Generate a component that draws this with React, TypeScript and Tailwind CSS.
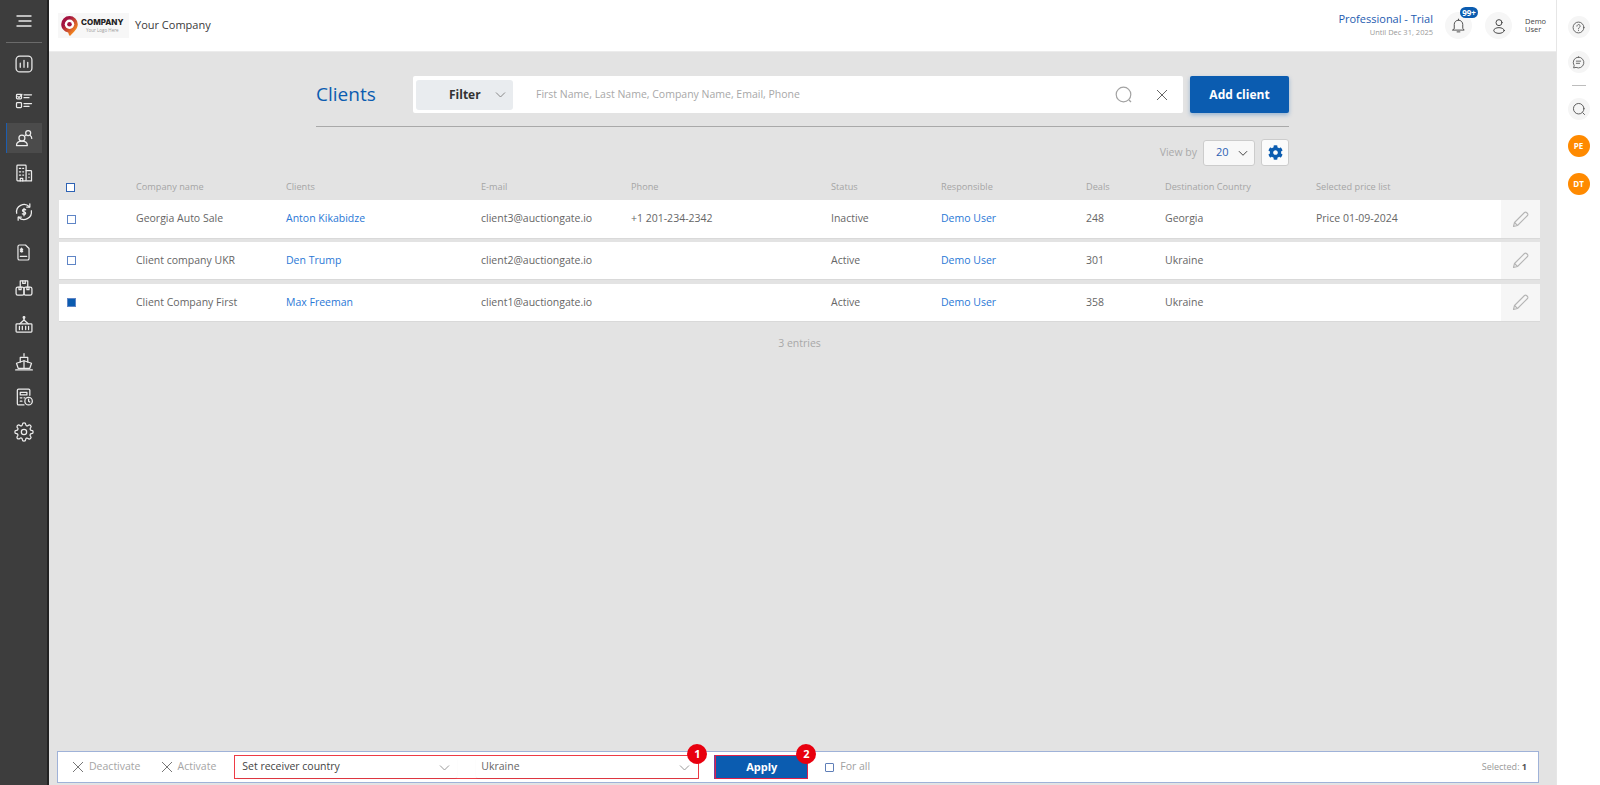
import React from "react";

const FONT = { fontFamily: '"Open Sans", "Liberation Sans", sans-serif' };

const I = ({ children, size = 20, vb = 24, sw = 1.5, cls = "" }: { children: React.ReactNode; size?: number; vb?: number; sw?: number; cls?: string }) => (
  <svg width={size} height={size} viewBox={`0 0 ${vb} ${vb}`} fill="none" stroke="currentColor" strokeWidth={sw} strokeLinecap="round" strokeLinejoin="round" className={cls}>
    {children}
  </svg>
);

const sideIcons: { h: string; icon: React.ReactNode }[] = [
  { h: "h-[37px]", icon: <I><rect x="2.500" y="2.500" width="19" height="19" rx="4.500" /><path d="M7.500 16v-5M12 16V7.500M16.500 16v-6" /></I> },
  { h: "h-[38px]", icon: <I><rect x="3" y="4" width="6" height="5.500" rx="1" /><path d="M4.500 6.500l1.500 1.500 3.500-4" /><path d="M12 4.500h9M12 8h6" /><rect x="3" y="14" width="6" height="6" rx="1" /><path d="M12 15h9M12 18.500h6" /></I> },
  { h: "h-[35px]", icon: <I><circle cx="9.500" cy="12" r="3.600" /><path d="M3 21c0-3.500 2.500-5.200 6.500-5.200s6.500 1.700 6.500 5.200z" /><circle cx="17" cy="6" r="3" /><path d="M13.500 8.500l.6.700M19.500 9c1.200.8 1.800 2 1.800 3.500" /></I> },
  { h: "h-[36px]", icon: <I><rect x="3.500" y="2.500" width="11" height="19" rx="1" /><path d="M14.500 9H20a1 1 0 0 1 1 1v11.500h-6.500" /><path d="M6.500 6.500h1.500M10.500 6.500h1M6.500 10.500h1.500M10.500 10.500h1M6.500 14.500h1.500M10.500 14.500h1M7.500 21.500v-3h3v3M18 13v.5M18 17v.5" /></I> },
  { h: "h-[42px]", icon: <I><path d="M14 9.300c-1-.9-3.800-.9-3.800.9 0 2.100 3.800 1 3.800 3.200 0 1.700-2.800 1.700-4 .8M12 7.500v9" /><path d="M3.200 13.500a9 9 0 0 1 15.300-7.800M20.800 10.500a9 9 0 0 1-15.300 7.800" /><path d="M19 2.200v3.800h-3.800M5 21.800V18h3.800" /></I> },
  { h: "h-[38px]", icon: <I size={19}><path d="M5 4.500a2 2 0 0 1 2-2h7.500L19 7v12.500a2 2 0 0 1-2 2H7a2 2 0 0 1-2-2z" /><path d="M9.500 6.500v5M8 8.200c0-1.300 3-1.300 3 0s-3 .8-3 2 3 1.300 3 0" /><path d="M8 17h8" /></I> },
  { h: "h-[34px]", icon: <I><path d="M7.500 11V3.500h9V11" /><path d="M10.500 3.500v3h3v-3" /><rect x="2.500" y="11" width="9.500" height="9.500" rx="2" /><rect x="12" y="11" width="9.500" height="9.500" rx="2" /><path d="M6 11v3h2.500v-3M15.500 11v3H18v-3" /></I> },
  { h: "h-[40px]", icon: <I><path d="M12 2.500v3.500" /><circle cx="12" cy="3" r="1" /><path d="M7 10.500L12 6l5 4.500" /><rect x="2.500" y="10.500" width="19" height="10" rx="1" /><path d="M6.500 13.500v4M10 13.500v4M14 13.500v4M17.500 13.500v4" /></I> },
  { h: "h-[34px]", icon: <I><path d="M12 2v3" /><path d="M7.500 12V6.500h9V12" /><path d="M3 13.500l9-3 9 3-2 6H5z" /><path d="M12 10.500v9" /><path d="M2 21.500h20" /></I> },
  { h: "h-[36px]", icon: <I><path d="M19 10V4a1.500 1.500 0 0 0-1.500-1.500h-12A1.500 1.500 0 0 0 4 4v16a1.500 1.500 0 0 0 1.500 1.500H12" /><path d="M7.500 6.500h8v3h-8zM7.500 13h2M7.500 17h2M12 13h1" /><circle cx="17.500" cy="17" r="4.500" /><path d="M17.500 14.500V17l1.500 1" /></I> },
  { h: "h-[34px]", icon: <I><circle cx="12" cy="12" r="3.200" /><path d="M19.400 15a1.700 1.700 0 0 0 .3 1.800l.1.100a2 2 0 1 1-2.900 2.900l-.1-.1a1.700 1.700 0 0 0-2.800 1.200V21a2 2 0 1 1-4 0v-.1a1.700 1.700 0 0 0-2.900-1.200l-.1.100a2 2 0 1 1-2.800-2.900l.1-.1a1.700 1.700 0 0 0-1.200-2.800H3a2 2 0 1 1 0-4h.1a1.700 1.700 0 0 0 1.200-2.900l-.1-.1a2 2 0 1 1 2.900-2.800l.1.100a1.700 1.700 0 0 0 1.800.3h.1a1.700 1.700 0 0 0 1-1.500V3a2 2 0 1 1 4 0v.1a1.700 1.700 0 0 0 2.800 1.200l.1-.1a2 2 0 1 1 2.900 2.800l-.1.100a1.700 1.700 0 0 0-.3 1.800v.1a1.700 1.700 0 0 0 1.500 1H21a2 2 0 1 1 0 4h-.1a1.700 1.700 0 0 0-1.500 1z" /></I> },
];

const Pencil = () => (
  <svg width="17" height="17" viewBox="0 0 17 17" fill="none" stroke="#b5b5b5" strokeWidth="1.100" strokeLinejoin="round">
    <path d="M1.500 15.500l1-4L12.500 1.500a1.400 1.400 0 0 1 2 0l1 1a1.400 1.400 0 0 1 0 2L5.500 14.500z" />
    <path d="M2.500 11.500l3 3" />
  </svg>
);

const Chevron = ({ color = "#9a9a9a", size = 11 }: { color?: string; size?: number }) => (
  <svg width={size} height={size} viewBox="0 0 11 11" fill="none" stroke={color} strokeWidth="1">
    <path d="M1 3.500l4.500 4.500L10 3.500" />
  </svg>
);

const Cross = ({ size = 12, color = "#777" }: { size?: number; color?: string }) => (
  <svg width={size} height={size} viewBox="0 0 12 12" fill="none" stroke={color} strokeWidth="1">
    <path d="M1 1l10 10M11 1L1 11" />
  </svg>
);

const cols = "grid grid-cols-[77px_150px_195px_150px_200px_110px_145px_79px_151px_185px_39px] items-center";

const rows = [
  { c: "Georgia Auto Sale", n: "Anton Kikabidze", e: "client3@auctiongate.io", p: "+1 201-234-2342", s: "Inactive", d: "248", k: "Georgia", l: "Price 01-09-2024", h: "h-[39px]", sel: false, mb: "mb-[3px]" },
  { c: "Client company UKR", n: "Den Trump", e: "client2@auctiongate.io", p: "", s: "Active", d: "301", k: "Ukraine", l: "", h: "h-[38px]", sel: false, mb: "mb-[4px]" },
  { c: "Client Company First", n: "Max Freeman", e: "client1@auctiongate.io", p: "", s: "Active", d: "358", k: "Ukraine", l: "", h: "h-[38px]", sel: true, mb: "" },
];

export default function App() {
  return (
    <div style={FONT} className="flex h-[785px] w-[1600px] overflow-hidden bg-[#e3e3e3] text-[10.500px] text-[#666]">
      {/* left rail */}
      <aside className="flex h-full w-[49px] shrink-0 flex-col items-center border-r-2 border-[#222] bg-[#3d3d3d] text-[#ececec]">
        <div className="flex h-[43px] w-[36px] shrink-0 items-center justify-center border-b border-[#6a6a6a]">
          <svg width="16" height="12" viewBox="0 0 16 12" stroke="#e8e8e8" strokeWidth="1.400" strokeLinecap="round"><path d="M1 1h14M3 6h12M1 11h14" /></svg>
        </div>
        <div className="mt-[2px] flex flex-col items-center">
          {sideIcons.map((ic, i) => (
            <div key={i} className={`flex ${ic.h} w-[36px] items-center justify-center`}>
              {i === 2 ? (
                <div className="flex h-[30px] w-[36px] items-center justify-center border-l border-[#1c5db0] bg-[#4b4b4b]">{ic.icon}</div>
              ) : (
                ic.icon
              )}
            </div>
          ))}
        </div>
      </aside>

      {/* centre */}
      <div className="flex min-w-0 flex-1 flex-col">
        <header className="flex h-[52px] shrink-0 items-center border-b border-[#ececec] bg-white pl-[9px]">
          <div className="flex h-[25px] w-[71px] items-center bg-[#f7f7f7] pl-[3px]">
            <svg width="17" height="20" viewBox="0 0 17 20" className="shrink-0">
              <defs>
                <linearGradient id="pin" x1="0" y1="0" x2="1" y2="1">
                  <stop offset="0.3" stopColor="#a3123f" />
                  <stop offset="0.8" stopColor="#f58a1f" />
                </linearGradient>
              </defs>
              <path d="M8.500 0a8.300 8.300 0 0 1 8.300 8.300c0 4.500-4.300 8-7.300 11.200-.5.500-1.300.300-1.500-.4l-.8-2.600C3.200 15.700.2 12.400.2 8.300A8.300 8.300 0 0 1 8.500 0z" fill="url(#pin)" />
              <circle cx="8.500" cy="8.300" r="4.700" fill="#fff" />
              <circle cx="8.500" cy="8.300" r="2.300" fill="#a3123f" />
            </svg>
            <div className="ml-[3px] flex flex-col items-center leading-none">
              <span className="text-[8px] font-extrabold leading-[9px] text-[#222]" style={{ fontFamily: '"Inter", sans-serif' }}>COMPANY</span>
              <span className="mt-[1px] text-[4.500px] leading-[5px] text-[#999]">Your Logo Here</span>
            </div>
          </div>
          <span className="ml-[6px] text-[11px] text-[#3a3a3a]">Your Company</span>

          <div className="ml-auto flex flex-col items-end pb-[3px]">
            <span className="text-[11px] leading-[14px] text-[#1d5bb0]">Professional - Trial</span>
            <span className="mt-[1px] text-[7.500px] leading-[10px] text-[#9a9a9a]">Until Dec 31, 2025</span>
          </div>
          <div className="relative ml-[12px] flex h-[27px] w-[27px] items-center justify-center rounded-full bg-[#f6f6f6] text-[#444]">
            <I size={17} sw={1.300}><path d="M6 16V10.500a6 6 0 0 1 12 0V16l2 2.500H4z" /><path d="M10 21h4M12 3v1.500" /></I>
            <span className="absolute right-[-6px] top-[-5px] flex h-[11px] w-[18px] items-center justify-center rounded-full bg-[#0b5cb0] text-[8px] font-bold leading-none text-white">99+</span>
          </div>
          <div className="ml-[13px] flex h-[27px] w-[27px] items-center justify-center rounded-full bg-[#f6f6f6] text-[#444]">
            <I size={18} sw={1.300}><circle cx="12" cy="7.500" r="4" /><ellipse cx="12" cy="18" rx="7" ry="3.800" /></I>
          </div>
          <div className="mb-[2px] ml-[13px] mr-[10px] flex w-[21px] flex-col text-[7.500px] leading-[8px] text-[#444]">
            <span>Demo</span>
            <span>User</span>
          </div>
        </header>

        <main className="flex min-h-0 flex-1 flex-col">
          <div className="mx-auto mt-[24px] w-[973px]">
            <div className="flex h-[51px] items-start border-b border-[#a9a9a9]">
              <h1 className="flex h-[37px] w-[97px] items-center text-[19px] text-[#0b5cb0]">Clients</h1>
              <div className="flex h-[37px] w-[770px] items-center rounded-[2px] bg-white pl-[3px]">
                <div className="flex h-[30px] w-[97px] items-center rounded-[3px] bg-[#e9ecef] pl-[33px]">
                  <span className="text-[12px] font-bold text-[#333]">Filter</span>
                  <span className="ml-[14px]"><Chevron color="#888" /></span>
                </div>
                <span className="ml-[23px] text-[10.500px] text-[#a8a8a8]">First Name, Last Name, Company Name, Email, Phone</span>
                <span className="ml-auto flex text-[#a0a0a0]">
                  <svg width="18" height="18" viewBox="0 0 18 18" fill="none" stroke="#a3a3a3" strokeWidth="1.200"><circle cx="8.500" cy="8.500" r="7.300" /><path d="M14 14l2 2" /></svg>
                </span>
                <span className="ml-[23px] mr-[15px] flex"><Cross size={12} color="#666" /></span>
              </div>
              <button className="ml-[7px] flex h-[37px] w-[99px] items-center justify-center rounded-[2px] bg-[#0b5cb0] text-[12px] font-bold text-white shadow-[0_2px_4px_rgba(11,92,176,0.35)]">Add client</button>
            </div>
            <div className="mt-[12px] flex h-[27px] items-center justify-end">
              <span className="text-[10.500px] text-[#aaa]">View by</span>
              <div className="ml-[6px] flex h-[26px] w-[52px] items-center rounded-[3px] border border-[#ccc] bg-[#f8f8f8] pl-[12px]">
                <span className="text-[11px] text-[#2d62b4]">20</span>
                <span className="ml-[9px]"><Chevron color="#333" size={10} /></span>
              </div>
              <div className="ml-[6px] flex h-[27px] w-[28px] items-center justify-center rounded-[3px] border border-[#ccc] bg-[#fbfbfb]">
                <svg width="15" height="15" viewBox="0 0 512 512" fill="#0b5cb0"><path d="M487.400 315.700l-42.600-24.600c4.300-23.200 4.300-47 0-70.200l42.600-24.600c4.900-2.800 7.100-8.600 5.500-14-11.100-35.600-30-67.800-54.700-94.600-3.800-4.100-10-5.100-14.800-2.300L380.800 110c-17.900-15.400-38.500-27.300-60.800-35.100V25.800c0-5.600-3.900-10.500-9.400-11.700-36.700-8.200-74.300-7.800-109.200 0-5.500 1.200-9.400 6.100-9.400 11.700V75c-22.200 7.900-42.800 19.800-60.800 35.100L88.700 85.500c-4.900-2.800-11-1.900-14.800 2.300-24.700 26.700-43.600 58.900-54.700 94.600-1.700 5.400.6 11.200 5.500 14L67.300 221c-4.300 23.200-4.300 47 0 70.200l-42.600 24.600c-4.900 2.800-7.100 8.600-5.500 14 11.100 35.600 30 67.800 54.700 94.600 3.800 4.100 10 5.100 14.800 2.300l42.600-24.600c17.900 15.400 38.500 27.300 60.800 35.100v49.200c0 5.600 3.900 10.500 9.400 11.700 36.700 8.200 74.300 7.800 109.200 0 5.500-1.200 9.400-6.100 9.400-11.700v-49.200c22.200-7.900 42.800-19.800 60.800-35.100l42.600 24.600c4.900 2.800 11 1.900 14.800-2.300 24.700-26.700 43.600-58.900 54.700-94.600 1.500-5.500-.7-11.300-5.600-14.100zM256 336c-44.100 0-80-35.900-80-80s35.900-80 80-80 80 35.900 80 80-35.900 80-80 80z" /></svg>
              </div>
            </div>
          </div>

          <div className="ml-[10px] mr-[16px]">
            <div className={`${cols} h-[34px] pt-[8px] text-[9.200px] text-[#a5a5a5]`}>
              <div className="pl-[7px]"><div className="h-[9px] w-[9px] border border-[#2d62b4] bg-white" /></div>
              <div>Company name</div>
              <div>Clients</div>
              <div>E-mail</div>
              <div>Phone</div>
              <div>Status</div>
              <div>Responsible</div>
              <div>Deals</div>
              <div>Destination Country</div>
              <div>Selected price list</div>
              <div />
            </div>
            {rows.map((r) => (
              <div key={r.n} className={`${cols} ${r.h} ${r.mb} border-b border-[#d9d9d9] bg-white`}>
                <div className="pl-[8px]">
                  <div className={`h-[9px] w-[9px] border border-[#5f85c6] ${r.sel ? "bg-[#0b5cb0]" : "bg-white"}`} />
                </div>
                <div>{r.c}</div>
                <div className="text-[#2a78d6]">{r.n}</div>
                <div>{r.e}</div>
                <div>{r.p}</div>
                <div>{r.s}</div>
                <div className="text-[#2a78d6]">Demo User</div>
                <div>{r.d}</div>
                <div>{r.k}</div>
                <div>{r.l}</div>
                <div className="flex h-full items-center justify-center bg-[#f6f6f6]"><Pencil /></div>
              </div>
            ))}
            <div className="mt-[14px] text-center text-[10.500px] text-[#a8a8a8]">3 entries</div>
          </div>

          <div className="mb-[2px] ml-[8px] mr-[17px] mt-auto flex h-[32px] shrink-0 items-center border border-[#9fb2d8] bg-white pl-[14px] pr-[11px] text-[10.500px]">
            <Cross />
            <span className="ml-[5px] text-[#a5a5a5]">Deactivate</span>
            <span className="ml-[20px] flex"><Cross /></span>
            <span className="ml-[5px] text-[#a5a5a5]">Activate</span>
            <div className="relative ml-[18px] flex h-[24px] w-[465px] items-center border border-[#ee3b45] pl-[2px]">
              <div className="flex h-[21px] w-[220px] items-center rounded-[2px] pl-[5px] shadow-[0_1px_1px_rgba(0,0,0,0.08)]">
                <span className="text-[#444]">Set receiver country</span>
                <span className="ml-auto mr-[7px] flex"><Chevron /></span>
              </div>
              <div className="ml-[19px] flex h-[21px] w-[222px] items-center rounded-[2px] pl-[5px] shadow-[0_1px_1px_rgba(0,0,0,0.08)]">
                <span className="text-[#666]">Ukraine</span>
                <span className="ml-auto mr-[8px] flex"><Chevron /></span>
              </div>
              <span className="absolute right-[-9px] top-[-12px] flex h-[20px] w-[20px] items-center justify-center rounded-full bg-[#e8000f] text-[11px] font-bold text-white">1</span>
            </div>
            <button className="relative ml-[16px] h-[24px] w-[93px] border border-[#e0204a] bg-[#0b5cb0] text-[11px] font-bold text-white shadow-[-1px_0_0_#7b3f9a]">
              Apply
              <span className="absolute right-[-9px] top-[-12px] flex h-[20px] w-[20px] items-center justify-center rounded-full bg-[#e8000f] text-[11px] font-bold text-white">2</span>
            </button>
            <div className="ml-[17px] h-[9px] w-[9px] rounded-[1px] border border-[#5f7fb8] bg-white" />
            <span className="ml-[6px] text-[#a0a0a0]">For all</span>
            <span className="ml-auto text-[9px] text-[#999]">Selected: <b className="font-bold text-[#555]">1</b></span>
          </div>
        </main>
      </div>

      {/* right rail */}
      <aside className="flex h-full w-[44px] shrink-0 flex-col items-center border-l border-[#e6e6e6] bg-white text-[#555]">
        <div className="mt-[16px] flex h-[22px] w-[22px] items-center justify-center rounded-full bg-[#f5f5f5]">
          <I size={13} sw={1.600}><circle cx="12" cy="12" r="10" /><path d="M9 9.500a3 3 0 1 1 4.500 2.600c-1 .6-1.500 1.200-1.500 2.400M12 17.500v.2" /></I>
        </div>
        <div className="mt-[13px] flex h-[22px] w-[22px] items-center justify-center rounded-full bg-[#f5f5f5]">
          <I size={13} sw={1.600}><path d="M12 2a10 10 0 1 1-4.500 19L3 22l1-4.500A10 10 0 0 1 12 2z" /><path d="M8 9.500h8M8 13.500h6" /></I>
        </div>
        <div className="mt-[12px] h-px w-[14px] bg-[#bdbdbd]" />
        <div className="mt-[12px] flex h-[22px] w-[22px] items-center justify-center rounded-full bg-[#f5f5f5]">
          <I size={14} sw={1.600}><circle cx="11.500" cy="11.500" r="9" /><path d="M18.500 18.500l3 3" /></I>
        </div>
        <div className="mt-[15px] flex h-[22px] w-[22px] items-center justify-center rounded-full bg-[#ff8a00] text-[8px] font-bold text-white">PE</div>
        <div className="mt-[16px] flex h-[22px] w-[22px] items-center justify-center rounded-full bg-[#ff8a00] text-[8px] font-bold text-white">DT</div>
      </aside>
    </div>
  );
}
